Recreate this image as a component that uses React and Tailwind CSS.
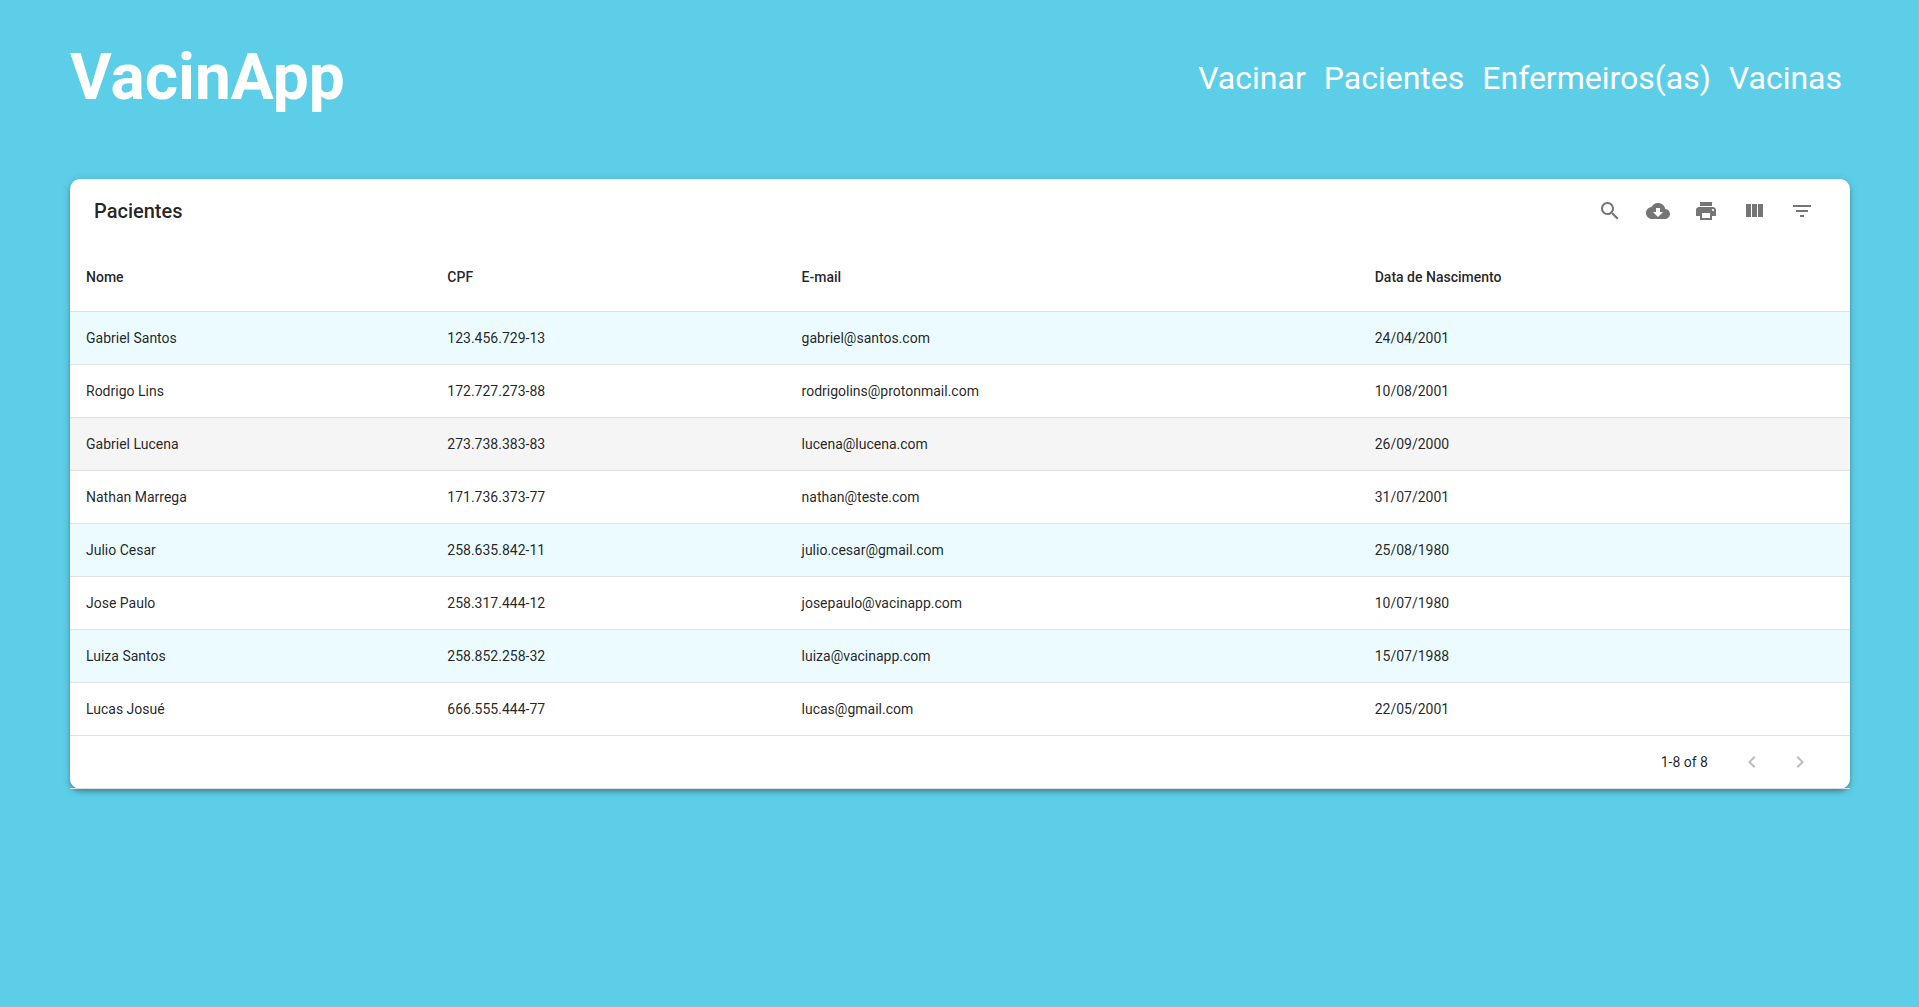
const patients = [
  { name: "Gabriel Santos", cpf: "123.456.729-13", email: "gabriel@santos.com", birth: "24/04/2001", tone: "bg-[#ebfbff]" },
  { name: "Rodrigo Lins", cpf: "172.727.273-88", email: "rodrigolins@protonmail.com", birth: "10/08/2001", tone: "bg-white" },
  { name: "Gabriel Lucena", cpf: "273.738.383-83", email: "lucena@lucena.com", birth: "26/09/2000", tone: "bg-[#f5f5f5]" },
  { name: "Nathan Marrega", cpf: "171.736.373-77", email: "nathan@teste.com", birth: "31/07/2001", tone: "bg-white" },
  { name: "Julio Cesar", cpf: "258.635.842-11", email: "julio.cesar@gmail.com", birth: "25/08/1980", tone: "bg-[#ebfbff]" },
  { name: "Jose Paulo", cpf: "258.317.444-12", email: "josepaulo@vacinapp.com", birth: "10/07/1980", tone: "bg-white" },
  { name: "Luiza Santos", cpf: "258.852.258-32", email: "luiza@vacinapp.com", birth: "15/07/1988", tone: "bg-[#ebfbff]" },
  { name: "Lucas Josué", cpf: "666.555.444-77", email: "lucas@gmail.com", birth: "22/05/2001", tone: "bg-white" },
];

const columns = [
  { label: "Nome", width: "w-[20.3%]" },
  { label: "CPF", width: "w-[19.9%]" },
  { label: "E-mail", width: "w-[32.2%]" },
  { label: "Data de Nascimento", width: "w-[27.6%]" },
];

const links = ["Vacinar", "Pacientes", "Enfermeiros(as)", "Vacinas"];

const tools = [
  {
    label: "Search",
    d: "M15.5 14h-.79l-.28-.27C15.41 12.59 16 11.11 16 9.5 16 5.91 13.09 3 9.5 3S3 5.91 3 9.5 5.91 16 9.5 16c1.61 0 3.09-.59 4.23-1.57l.27.28v.79l5 4.99L20.49 19l-4.99-5zm-6 0C7.01 14 5 11.99 5 9.5S7.01 5 9.5 5 14 7.01 14 9.5 11.99 14 9.5 14z",
  },
  {
    label: "Download CSV",
    d: "M19.35 10.04C18.67 6.59 15.64 4 12 4 9.11 4 6.6 5.64 5.35 8.04 2.34 8.36 0 10.91 0 14c0 3.31 2.69 6 6 6h13c2.76 0 5-2.24 5-5 0-2.64-2.05-4.78-4.65-4.96zM17 13l-5 5-5-5h3V9h4v4h3z",
  },
  {
    label: "Print",
    d: "M19 8H5c-1.66 0-3 1.34-3 3v6h4v4h12v-4h4v-6c0-1.66-1.34-3-3-3zm-3 11H8v-5h8v5zm3-7c-.55 0-1-.45-1-1s.45-1 1-1 1 .45 1 1-.45 1-1 1zm-1-9H6v4h12V3z",
  },
  { label: "View Columns", d: "M10 18h5V5h-5v13zm-6 0h5V5H4v13zM16 5v13h5V5h-5z" },
  { label: "Filter Table", d: "M10 18h4v-2h-4v2zM3 6v2h18V6H3zm3 7h12v-2H6v2z" },
];

function Icon({ d }) {
  return (
    <svg viewBox="0 0 24 24" className="size-6 fill-current" aria-hidden="true">
      <path d={d} />
    </svg>
  );
}

function IconButton({ label, d, disabled }) {
  return (
    <button
      type="button"
      aria-label={label}
      disabled={disabled}
      className="flex size-12 items-center justify-center rounded-full text-black/54 disabled:text-black/26"
    >
      <Icon d={d} />
    </button>
  );
}

function Cell({ children }) {
  return <td className="border-b border-[#e0e0e0] p-4 leading-5">{children}</td>;
}

export default function App() {
  return (
    <div className="min-h-screen bg-[#5dcee7] font-['Roboto',sans-serif] text-black/87">
      <header className="flex h-[155px] items-center justify-between pr-[69px] pl-[70px] text-white">
        <h1 className="text-[64px] font-bold">VacinApp</h1>
        <nav className="flex gap-[18px] pr-2 text-[32px]">
          {links.map((link) => (
            <a key={link} href="#">
              {link}
            </a>
          ))}
        </nav>
      </header>

      <main className="pt-6 pr-[69px] pb-12 pl-[70px]">
        <section className="rounded-[10px] bg-white shadow-[0_2px_4px_-1px_rgba(0,0,0,0.2),0_4px_5px_0_rgba(0,0,0,0.14),0_1px_10px_0_rgba(0,0,0,0.12)]">
          <div className="flex h-16 items-center justify-between px-6">
            <h2 className="text-xl font-medium">Pacientes</h2>
            <div className="flex">
              {tools.map((tool) => (
                <IconButton key={tool.label} {...tool} />
              ))}
            </div>
          </div>

          <table className="w-full table-fixed border-separate border-spacing-0 text-left text-sm">
            <thead>
              <tr>
                {columns.map((column) => (
                  <th
                    key={column.label}
                    className={`border-b border-[#e0e0e0] px-4 py-6 leading-5 font-medium ${column.width}`}
                  >
                    {column.label}
                  </th>
                ))}
              </tr>
            </thead>
            <tbody>
              {patients.map((p) => (
                <tr key={p.cpf} className={p.tone}>
                  <Cell>{p.name}</Cell>
                  <Cell>{p.cpf}</Cell>
                  <Cell>{p.email}</Cell>
                  <Cell>{p.birth}</Cell>
                </tr>
              ))}
            </tbody>
          </table>

          <footer className="flex h-[53px] items-center justify-end border-b border-[#e0e0e0] pr-[26px] text-sm">
            <span className="pr-5">1-8 of 8</span>
            <IconButton label="Previous Page" disabled d="M15.41 7.41L14 6l-6 6 6 6 1.41-1.41L10.83 12z" />
            <IconButton label="Next Page" disabled d="M10 6L8.59 7.41 13.17 12l-4.58 4.59L10 18l6-6z" />
          </footer>
        </section>
      </main>
    </div>
  );
}
